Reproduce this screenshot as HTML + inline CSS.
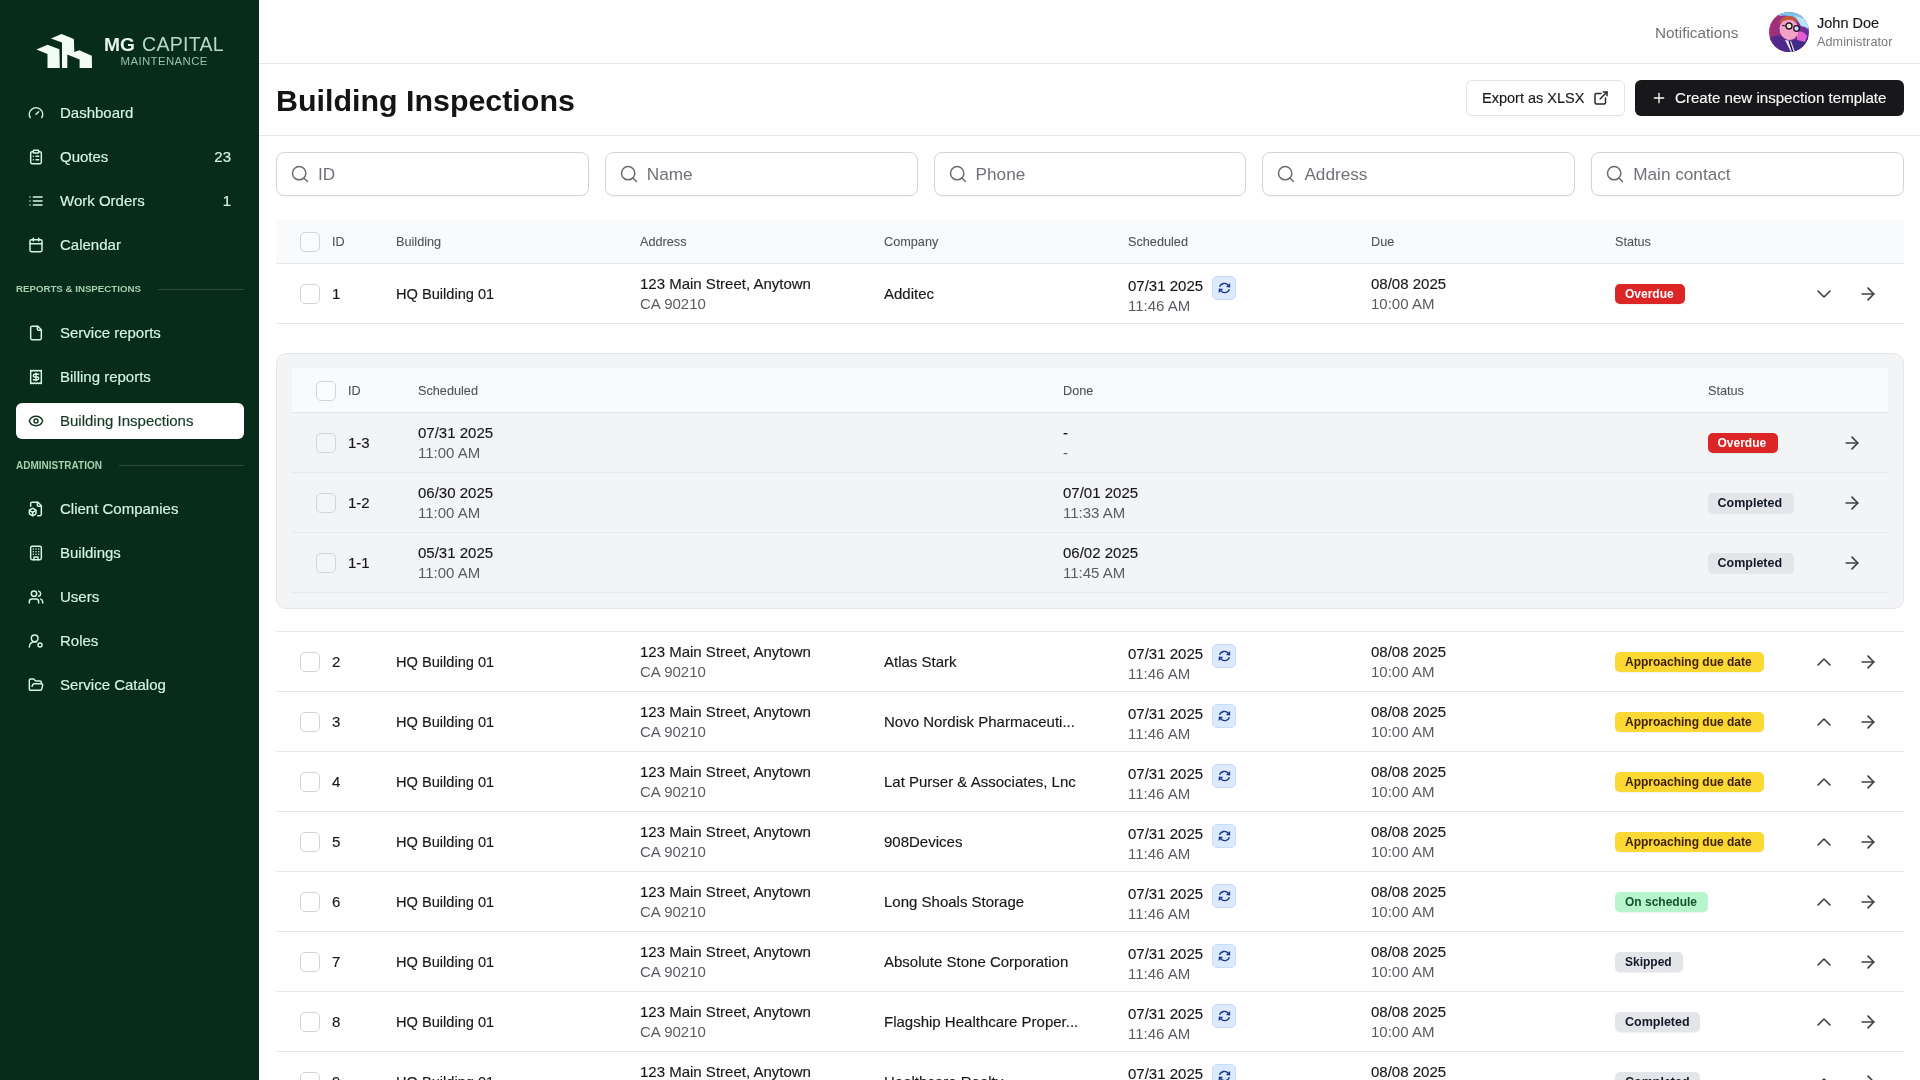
<!DOCTYPE html><html><head><meta charset="utf-8"><title>Building Inspections</title><style>
*{margin:0;padding:0;box-sizing:border-box}
html,body{width:1920px;height:1080px;overflow:hidden;background:#fff;font-family:"Liberation Sans", sans-serif;}
.abs{position:absolute}
#root{position:absolute;left:0;top:0;width:1920px;height:1080px;will-change:transform}
.t{position:absolute;white-space:nowrap;line-height:1}
#sb{position:absolute;left:0;top:0;width:259px;height:1080px;background:#072d1a;}
.nav{color:#d9f5e2;font-size:15px;-webkit-text-stroke:0.15px #d9f5e2}
.sec{color:#a6cfb0;font-size:10px;font-weight:bold;letter-spacing:0px}
.hd{color:#52525b;font-size:12.7px;-webkit-text-stroke:0.1px #52525b}
.p{color:#18181b;font-size:15px;-webkit-text-stroke:0.15px #18181b}
.s{color:#5b5b63;font-size:15px}
.cb{position:absolute;width:20px;height:20px;border:1px solid #d4d4d8;border-radius:5px;background:#fff}
.cbg{background:#f4f5f7}
.line{position:absolute;height:1px;background:#e7e8eb}
.badge{position:absolute;height:20px;border-radius:5px;font-size:12px;font-weight:bold;line-height:20px;padding:0 10px;white-space:nowrap;box-shadow:0 1px 1px rgba(0,0,0,0.06)}
.red{background:#dc2626;color:#fff}
.yel{background:#fcd833;color:#3f2107}
.grn{background:#b8f5cd;color:#14532d}
.gry{background:#e4e5e9;color:#111827}
.ic{position:absolute;line-height:0}
</style></head><body><div id="root"><div id="sb"><svg class="abs" style="left:0;top:0" width="259" height="90" viewBox="0 0 259 90"><polygon fill="#f3fbf5" points="36.4,49.5 47.5,44.8 59.4,49.3 59.8,68 47.5,68 47.5,54"/><polygon fill="#f3fbf5" points="50.9,38.4 61.5,34 73.9,39.1 74.3,52 79.4,50.2 91.8,55.7 92,68 79.6,68 79.6,59.5 67.3,54.4 67.3,68 62,68 62,42.5"/></svg><div class="t" style="left:104px;top:35px;font-size:19.2px;font-weight:bold;color:#eaf6ee">MG</div><div class="t" style="left:142px;top:35px;font-size:19.5px;color:#b9d8c3;letter-spacing:0.3px">CAPITAL</div><div class="t" style="left:120.5px;top:56px;font-size:11.4px;color:#98c2a6;letter-spacing:0.4px">MAINTENANCE</div><div class="abs" style="left:16px;top:403px;width:228px;height:36px;background:#fdfefd;border-radius:6px"></div><div class="ic" style="left:28px;top:105px;color:#d9f5e2"><svg width="16" height="16" viewBox="0 0 24 24" fill="none" stroke="currentColor" stroke-width="2.2" stroke-linecap="round" stroke-linejoin="round" ><path d="m12 14 4-4"/><path d="M3.34 19a10 10 0 1 1 17.32 0"/></svg></div><div class="t nav" style="left:60px;top:105px;color:#d9f5e2;-webkit-text-stroke-color:#d9f5e2">Dashboard</div><div class="ic" style="left:28px;top:149px;color:#d9f5e2"><svg width="16" height="16" viewBox="0 0 24 24" fill="none" stroke="currentColor" stroke-width="2.2" stroke-linecap="round" stroke-linejoin="round" ><rect width="8" height="4" x="8" y="2" rx="1" ry="1"/><path d="M16 4h2a2 2 0 0 1 2 2v14a2 2 0 0 1-2 2H6a2 2 0 0 1-2-2V6a2 2 0 0 1 2-2h2"/><path d="M12 11h4"/><path d="M12 16h4"/><path d="M8 11h.01"/><path d="M8 16h.01"/></svg></div><div class="t nav" style="left:60px;top:149px;color:#d9f5e2;-webkit-text-stroke-color:#d9f5e2">Quotes</div><div class="t nav" style="right:28px;top:149px">23</div><div class="ic" style="left:28px;top:193px;color:#d9f5e2"><svg width="16" height="16" viewBox="0 0 24 24" fill="none" stroke="currentColor" stroke-width="2.2" stroke-linecap="round" stroke-linejoin="round" ><path d="M3 12h.01"/><path d="M3 18h.01"/><path d="M3 6h.01"/><path d="M8 12h13"/><path d="M8 18h13"/><path d="M8 6h13"/></svg></div><div class="t nav" style="left:60px;top:193px;color:#d9f5e2;-webkit-text-stroke-color:#d9f5e2">Work Orders</div><div class="t nav" style="right:28px;top:193px">1</div><div class="ic" style="left:28px;top:237px;color:#d9f5e2"><svg width="16" height="16" viewBox="0 0 24 24" fill="none" stroke="currentColor" stroke-width="2.2" stroke-linecap="round" stroke-linejoin="round" ><path d="M8 2v4"/><path d="M16 2v4"/><rect width="18" height="18" x="3" y="4" rx="2"/><path d="M3 10h18"/></svg></div><div class="t nav" style="left:60px;top:237px;color:#d9f5e2;-webkit-text-stroke-color:#d9f5e2">Calendar</div><div class="ic" style="left:28px;top:325px;color:#d9f5e2"><svg width="16" height="16" viewBox="0 0 24 24" fill="none" stroke="currentColor" stroke-width="2.2" stroke-linecap="round" stroke-linejoin="round" ><path d="M15 2H6a2 2 0 0 0-2 2v16a2 2 0 0 0 2 2h12a2 2 0 0 0 2-2V7Z"/><path d="M14 2v4a2 2 0 0 0 2 2h4"/></svg></div><div class="t nav" style="left:60px;top:325px;color:#d9f5e2;-webkit-text-stroke-color:#d9f5e2">Service reports</div><div class="ic" style="left:28px;top:369px;color:#d9f5e2"><svg width="16" height="16" viewBox="0 0 24 24" fill="none" stroke="currentColor" stroke-width="2.2" stroke-linecap="round" stroke-linejoin="round" ><path d="M4 2v20l2-1 2 1 2-1 2 1 2-1 2 1 2-1 2 1V2l-2 1-2-1-2 1-2-1-2 1-2-1-2 1Z"/><path d="M16 8h-6a2 2 0 1 0 0 4h4a2 2 0 1 1 0 4H8"/><path d="M12 17.5v-11"/></svg></div><div class="t nav" style="left:60px;top:369px;color:#d9f5e2;-webkit-text-stroke-color:#d9f5e2">Billing reports</div><div class="ic" style="left:28px;top:413px;color:#163626"><svg width="16" height="16" viewBox="0 0 24 24" fill="none" stroke="currentColor" stroke-width="2.2" stroke-linecap="round" stroke-linejoin="round" ><path d="M2.062 12.348a1 1 0 0 1 0-.696 10.75 10.75 0 0 1 19.876 0 1 1 0 0 1 0 .696 10.75 10.75 0 0 1-19.876 0"/><circle cx="12" cy="12" r="3"/></svg></div><div class="t nav" style="left:60px;top:413px;color:#163626;-webkit-text-stroke-color:#163626">Building Inspections</div><div class="ic" style="left:28px;top:501px;color:#d9f5e2"><svg width="16" height="16" viewBox="0 0 24 24" fill="none" stroke="currentColor" stroke-width="2.2" stroke-linecap="round" stroke-linejoin="round" ><path d="M14.5 22H18a2 2 0 0 0 2-2V7l-5-5H6a2 2 0 0 0-2 2v4"/><path d="M14 2v4a2 2 0 0 0 2 2h4"/><path d="M3 13.1a2 2 0 0 0-1 1.76v3.24a2 2 0 0 0 .97 1.78L6 21.7a2 2 0 0 0 2.03.01L11 19.9a2 2 0 0 0 1-1.76V14.9a2 2 0 0 0-.97-1.78L8 11.3a2 2 0 0 0-2.03-.01Z"/><path d="M7 17v5"/><path d="M11.7 14.2 7 17l-4.7-2.8"/></svg></div><div class="t nav" style="left:60px;top:501px;color:#d9f5e2;-webkit-text-stroke-color:#d9f5e2">Client Companies</div><div class="ic" style="left:28px;top:545px;color:#d9f5e2"><svg width="16" height="16" viewBox="0 0 24 24" fill="none" stroke="currentColor" stroke-width="2.2" stroke-linecap="round" stroke-linejoin="round" ><rect width="16" height="20" x="4" y="2" rx="2" ry="2"/><path d="M9 22v-4h6v4"/><path d="M8 6h.01"/><path d="M16 6h.01"/><path d="M12 6h.01"/><path d="M12 10h.01"/><path d="M12 14h.01"/><path d="M16 10h.01"/><path d="M16 14h.01"/><path d="M8 10h.01"/><path d="M8 14h.01"/></svg></div><div class="t nav" style="left:60px;top:545px;color:#d9f5e2;-webkit-text-stroke-color:#d9f5e2">Buildings</div><div class="ic" style="left:28px;top:589px;color:#d9f5e2"><svg width="16" height="16" viewBox="0 0 24 24" fill="none" stroke="currentColor" stroke-width="2.2" stroke-linecap="round" stroke-linejoin="round" ><path d="M16 21v-2a4 4 0 0 0-4-4H6a4 4 0 0 0-4 4v2"/><circle cx="9" cy="7" r="4"/><path d="M22 21v-2a4 4 0 0 0-3-3.87"/><path d="M16 3.13a4 4 0 0 1 0 7.75"/></svg></div><div class="t nav" style="left:60px;top:589px;color:#d9f5e2;-webkit-text-stroke-color:#d9f5e2">Users</div><div class="ic" style="left:28px;top:633px;color:#d9f5e2"><svg width="16" height="16" viewBox="0 0 24 24" fill="none" stroke="currentColor" stroke-width="2.2" stroke-linecap="round" stroke-linejoin="round" ><path d="M2 21a8 8 0 0 1 10.4-7.6"/><circle cx="10" cy="8" r="5"/><circle cx="18" cy="18" r="3"/></svg></div><div class="t nav" style="left:60px;top:633px;color:#d9f5e2;-webkit-text-stroke-color:#d9f5e2">Roles</div><div class="ic" style="left:28px;top:677px;color:#d9f5e2"><svg width="16" height="16" viewBox="0 0 24 24" fill="none" stroke="currentColor" stroke-width="2.2" stroke-linecap="round" stroke-linejoin="round" ><path d="m6 14 1.5-2.9A2 2 0 0 1 9.24 10H20a2 2 0 0 1 1.94 2.5l-1.54 6a2 2 0 0 1-1.95 1.5H4a2 2 0 0 1-2-2V5a2 2 0 0 1 2-2h3.9a2 2 0 0 1 1.69.9l.81 1.2a2 2 0 0 0 1.67.9H18a2 2 0 0 1 2 2v2"/></svg></div><div class="t nav" style="left:60px;top:677px;color:#d9f5e2;-webkit-text-stroke-color:#d9f5e2">Service Catalog</div><div class="t sec" style="left:16px;top:284px;font-size:9.7px">REPORTS &amp; INSPECTIONS</div><div class="abs" style="left:158px;top:289px;width:86px;height:1px;background:#2a4a37"></div><div class="t sec" style="left:16px;top:461px">ADMINISTRATION</div><div class="abs" style="left:119px;top:465px;width:125px;height:1px;background:#2a4a37"></div></div><div class="line" style="left:259px;top:63px;width:1661px"></div><div class="t" style="left:1655px;top:25px;font-size:15.3px;color:#737373">Notifications</div><svg class="abs" style="left:1769px;top:12px" width="40" height="40" viewBox="0 0 40 40"><defs><clipPath id="av"><circle cx="20" cy="20" r="20"/></clipPath><linearGradient id="avg" x1="0" y1="0" x2="1" y2="0.3"><stop offset="0" stop-color="#b0306a"/><stop offset="0.55" stop-color="#8a2f8e"/><stop offset="1" stop-color="#6a2a9a"/></linearGradient><linearGradient id="avs" x1="0" y1="0" x2="1" y2="0"><stop offset="0" stop-color="#5a2a8a"/><stop offset="1" stop-color="#3a2a8a"/></linearGradient></defs><g clip-path="url(#av)"><rect width="40" height="40" fill="url(#avg)"/><path d="M10 0 L40 0 L40 18 Q34 14 30 10 Q24 2 10 4Z" fill="#7cc4ec"/><path d="M26 4 L40 8 L40 16 L32 14Z" fill="#b8e4f4"/><path d="M0 26 Q8 22 14 24 L24 28 L40 26 L40 40 L0 40Z" fill="url(#avs)"/><path d="M28 20 Q34 18 38 24 L36 30 L28 28Z" fill="#e060d0"/><ellipse cx="20" cy="17.5" rx="9.5" ry="10.5" transform="rotate(-18 20 17.5)" fill="#f2a2c2"/><path d="M10 12 Q12 3 21 4 Q28 5 30 11 Q24 7 18 8 Q13 9 10 12Z" fill="#c25a3e"/><circle cx="20" cy="14" r="3" fill="#dfe8c8" stroke="#2a0e2a" stroke-width="1.3"/><circle cx="27.5" cy="16.5" r="2.8" fill="#bfe4f8" stroke="#2a0e2a" stroke-width="1.3"/><path d="M13 13.5 L17 14" stroke="#2a0e2a" stroke-width="1.2"/><path d="M16 28 L22 40 L26 40 L22 29Z" fill="#efe6f4"/><path d="M19.5 29 L23 40 L24.5 40 L21 29Z" fill="#1a1030"/></g></svg><div class="t" style="left:1817px;top:16px;font-size:14.5px;color:#18181b;-webkit-text-stroke:0.15px #18181b">John Doe</div><div class="t" style="left:1817px;top:36px;font-size:12.6px;color:#77777d;letter-spacing:0.1px">Administrator</div><div class="t" style="left:276px;top:85px;font-size:30.4px;font-weight:bold;color:#141414">Building Inspections</div><div class="line" style="left:259px;top:135px;width:1661px"></div><div class="abs" style="left:1466px;top:80px;width:159px;height:36px;border:1px solid #e4e4e7;border-radius:6px;background:#fff;box-shadow:0 1px 2px rgba(0,0,0,0.04)"></div><div class="t" style="left:1482px;top:90.5px;font-size:14.5px;color:#18181b;-webkit-text-stroke:0.15px #18181b">Export as XLSX</div><div class="ic" style="left:1592px;top:89px;color:#27272a"><svg width="18" height="18" viewBox="0 0 24 24" fill="none" stroke="currentColor" stroke-width="2" stroke-linecap="round" stroke-linejoin="round" ><path d="M12 6h-6a2 2 0 0 0 -2 2v10a2 2 0 0 0 2 2h10a2 2 0 0 0 2 -2v-6"/><path d="M11 13l9 -9"/><path d="M15 4h5v5"/></svg></div><div class="abs" style="left:1635px;top:80px;width:269px;height:36px;border-radius:6px;background:#18181b"></div><div class="ic" style="left:1651px;top:90px;color:#fafafa"><svg width="16" height="16" viewBox="0 0 24 24" fill="none" stroke="currentColor" stroke-width="2" stroke-linecap="round" stroke-linejoin="round" ><path d="M5 12h14"/><path d="M12 5v14"/></svg></div><div class="t" style="left:1675px;top:90px;font-size:15.1px;color:#fafafa;-webkit-text-stroke:0.15px #fafafa">Create new inspection template</div><div class="abs" style="left:276.0px;top:152px;width:312.8px;height:44px;border:1px solid #d4d4d8;border-radius:8px;background:#fff;box-shadow:0 1px 2px rgba(0,0,0,0.03)"></div><div class="ic" style="left:290.0px;top:164px;color:#6b6b73"><svg width="20" height="20" viewBox="0 0 24 24" fill="none" stroke="currentColor" stroke-width="1.8" stroke-linecap="round" stroke-linejoin="round" ><circle cx="11" cy="11" r="8"/><path d="m21 21-4.3-4.3"/></svg></div><div class="t" style="left:318.0px;top:166px;font-size:17.2px;color:#71717a">ID</div><div class="abs" style="left:604.8px;top:152px;width:312.8px;height:44px;border:1px solid #d4d4d8;border-radius:8px;background:#fff;box-shadow:0 1px 2px rgba(0,0,0,0.03)"></div><div class="ic" style="left:618.8px;top:164px;color:#6b6b73"><svg width="20" height="20" viewBox="0 0 24 24" fill="none" stroke="currentColor" stroke-width="1.8" stroke-linecap="round" stroke-linejoin="round" ><circle cx="11" cy="11" r="8"/><path d="m21 21-4.3-4.3"/></svg></div><div class="t" style="left:646.8px;top:166px;font-size:17.2px;color:#71717a">Name</div><div class="abs" style="left:933.6px;top:152px;width:312.8px;height:44px;border:1px solid #d4d4d8;border-radius:8px;background:#fff;box-shadow:0 1px 2px rgba(0,0,0,0.03)"></div><div class="ic" style="left:947.6px;top:164px;color:#6b6b73"><svg width="20" height="20" viewBox="0 0 24 24" fill="none" stroke="currentColor" stroke-width="1.8" stroke-linecap="round" stroke-linejoin="round" ><circle cx="11" cy="11" r="8"/><path d="m21 21-4.3-4.3"/></svg></div><div class="t" style="left:975.6px;top:166px;font-size:17.2px;color:#71717a">Phone</div><div class="abs" style="left:1262.4px;top:152px;width:312.8px;height:44px;border:1px solid #d4d4d8;border-radius:8px;background:#fff;box-shadow:0 1px 2px rgba(0,0,0,0.03)"></div><div class="ic" style="left:1276.4px;top:164px;color:#6b6b73"><svg width="20" height="20" viewBox="0 0 24 24" fill="none" stroke="currentColor" stroke-width="1.8" stroke-linecap="round" stroke-linejoin="round" ><circle cx="11" cy="11" r="8"/><path d="m21 21-4.3-4.3"/></svg></div><div class="t" style="left:1304.4px;top:166px;font-size:17.2px;color:#71717a">Address</div><div class="abs" style="left:1591.2px;top:152px;width:312.8px;height:44px;border:1px solid #d4d4d8;border-radius:8px;background:#fff;box-shadow:0 1px 2px rgba(0,0,0,0.03)"></div><div class="ic" style="left:1605.2px;top:164px;color:#6b6b73"><svg width="20" height="20" viewBox="0 0 24 24" fill="none" stroke="currentColor" stroke-width="1.8" stroke-linecap="round" stroke-linejoin="round" ><circle cx="11" cy="11" r="8"/><path d="m21 21-4.3-4.3"/></svg></div><div class="t" style="left:1633.2px;top:166px;font-size:17.2px;color:#71717a">Main contact</div><div class="abs" style="left:276px;top:220px;width:1628px;height:43px;background:#f9fafb"></div><div class="line" style="left:276px;top:263px;width:1628px"></div><div class="cb" style="left:300px;top:232px;background:#fafbfc"></div><div class="t hd" style="left:332px;top:236px">ID</div><div class="t hd" style="left:396px;top:236px">Building</div><div class="t hd" style="left:640px;top:236px">Address</div><div class="t hd" style="left:884px;top:236px">Company</div><div class="t hd" style="left:1128px;top:236px">Scheduled</div><div class="t hd" style="left:1371px;top:236px">Due</div><div class="t hd" style="left:1615px;top:236px">Status</div><div class="cb" style="left:300px;top:284px"></div><div class="t p" style="left:332px;top:286px">1</div><div class="t p" style="left:396px;top:287px;font-size:14.6px">HQ Building 01</div><div class="t p" style="left:640px;top:276px">123 Main Street, Anytown</div><div class="t s" style="left:640px;top:296px">CA 90210</div><div class="t p" style="left:884px;top:286px">Additec</div><div class="t p" style="left:1128px;top:278px">07/31 2025</div><div class="t s" style="left:1128px;top:298px">11:46 AM</div><div class="abs" style="left:1212px;top:276px;width:24px;height:24px;border-radius:5px;background:#dbeafe;border:1px solid #c9dcfb"></div><svg class="abs" style="left:1212px;top:276px" width="24" height="24" viewBox="0 0 24 24"><path d="M7.6 10.8A5 5 0 0 1 16.3 9.4" fill="none" stroke="#1e3a8a" stroke-width="1.35"/><path d="M17.4 13.3A5 5 0 0 1 8.7 14.6" fill="none" stroke="#1e3a8a" stroke-width="1.35"/><polygon points="18.1,7.1 18.2,11.6 13.9,11.1" fill="#1e3a8a"/><polygon points="6.6,16.9 6.8,12.4 11.1,12.9" fill="#1e3a8a"/></svg><div class="t p" style="left:1371px;top:276px">08/08 2025</div><div class="t s" style="left:1371px;top:296px">10:00 AM</div><div class="badge red" style="left:1615px;top:284px;width:70px;">Overdue</div><div class="ic" style="left:1812px;top:282px;color:#3f3f46"><svg width="24" height="24" viewBox="0 0 24 24" fill="none" stroke="currentColor" stroke-width="1.6" stroke-linecap="round" stroke-linejoin="round" ><path d="m6 9 6 6 6-6"/></svg></div><div class="ic" style="left:1858px;top:284px;color:#3f3f46"><svg width="20" height="20" viewBox="0 0 24 24" fill="none" stroke="currentColor" stroke-width="2" stroke-linecap="round" stroke-linejoin="round" ><path d="M5 12h14"/><path d="m12 5 7 7-7 7"/></svg></div><div class="line" style="left:276px;top:323px;width:1628px"></div><div class="abs" style="left:276px;top:353px;width:1628px;height:256px;border:1px solid #e6e7ea;border-radius:10px;background:#f3f4f6"></div><div class="abs" style="left:292px;top:368px;width:1596px;height:44px;background:#f9fafb"></div><div class="line" style="left:292px;top:412px;width:1596px;background:#e5e7eb"></div><div class="cb" style="left:316px;top:381px;background:#fafbfc"></div><div class="t hd" style="left:348px;top:385px">ID</div><div class="t hd" style="left:418px;top:385px">Scheduled</div><div class="t hd" style="left:1063px;top:385px">Done</div><div class="t hd" style="left:1708px;top:385px">Status</div><div class="cb cbg" style="left:316px;top:433px"></div><div class="t p" style="left:348px;top:435px">1-3</div><div class="t p" style="left:418px;top:425px">07/31 2025</div><div class="t s" style="left:418px;top:445px">11:00 AM</div><div class="t p" style="left:1063px;top:425px">-</div><div class="t s" style="left:1063px;top:445px">-</div><div class="badge red" style="left:1707.5px;top:433px;width:70px;">Overdue</div><div class="ic" style="left:1842px;top:433px;color:#3f3f46"><svg width="20" height="20" viewBox="0 0 24 24" fill="none" stroke="currentColor" stroke-width="2" stroke-linecap="round" stroke-linejoin="round" ><path d="M5 12h14"/><path d="m12 5 7 7-7 7"/></svg></div><div class="line" style="left:292px;top:472px;width:1596px"></div><div class="cb cbg" style="left:316px;top:493px"></div><div class="t p" style="left:348px;top:495px">1-2</div><div class="t p" style="left:418px;top:485px">06/30 2025</div><div class="t s" style="left:418px;top:505px">11:00 AM</div><div class="t p" style="left:1063px;top:485px">07/01 2025</div><div class="t s" style="left:1063px;top:505px">11:33 AM</div><div class="badge gry" style="left:1707.5px;top:493px;width:85px;font-size:12.5px;width:86px">Completed</div><div class="ic" style="left:1842px;top:493px;color:#3f3f46"><svg width="20" height="20" viewBox="0 0 24 24" fill="none" stroke="currentColor" stroke-width="2" stroke-linecap="round" stroke-linejoin="round" ><path d="M5 12h14"/><path d="m12 5 7 7-7 7"/></svg></div><div class="line" style="left:292px;top:532px;width:1596px"></div><div class="cb cbg" style="left:316px;top:553px"></div><div class="t p" style="left:348px;top:555px">1-1</div><div class="t p" style="left:418px;top:545px">05/31 2025</div><div class="t s" style="left:418px;top:565px">11:00 AM</div><div class="t p" style="left:1063px;top:545px">06/02 2025</div><div class="t s" style="left:1063px;top:565px">11:45 AM</div><div class="badge gry" style="left:1707.5px;top:553px;width:85px;font-size:12.5px;width:86px">Completed</div><div class="ic" style="left:1842px;top:553px;color:#3f3f46"><svg width="20" height="20" viewBox="0 0 24 24" fill="none" stroke="currentColor" stroke-width="2" stroke-linecap="round" stroke-linejoin="round" ><path d="M5 12h14"/><path d="m12 5 7 7-7 7"/></svg></div><div class="line" style="left:292px;top:592px;width:1596px"></div><div class="line" style="left:276px;top:631px;width:1628px"></div><div class="cb" style="left:300px;top:652px"></div><div class="t p" style="left:332px;top:654px">2</div><div class="t p" style="left:396px;top:655px;font-size:14.6px">HQ Building 01</div><div class="t p" style="left:640px;top:644px">123 Main Street, Anytown</div><div class="t s" style="left:640px;top:664px">CA 90210</div><div class="t p" style="left:884px;top:654px">Atlas Stark</div><div class="t p" style="left:1128px;top:646px">07/31 2025</div><div class="t s" style="left:1128px;top:666px">11:46 AM</div><div class="abs" style="left:1212px;top:644px;width:24px;height:24px;border-radius:5px;background:#dbeafe;border:1px solid #c9dcfb"></div><svg class="abs" style="left:1212px;top:644px" width="24" height="24" viewBox="0 0 24 24"><path d="M7.6 10.8A5 5 0 0 1 16.3 9.4" fill="none" stroke="#1e3a8a" stroke-width="1.35"/><path d="M17.4 13.3A5 5 0 0 1 8.7 14.6" fill="none" stroke="#1e3a8a" stroke-width="1.35"/><polygon points="18.1,7.1 18.2,11.6 13.9,11.1" fill="#1e3a8a"/><polygon points="6.6,16.9 6.8,12.4 11.1,12.9" fill="#1e3a8a"/></svg><div class="t p" style="left:1371px;top:644px">08/08 2025</div><div class="t s" style="left:1371px;top:664px">10:00 AM</div><div class="badge yel" style="left:1615px;top:652px;width:149px;">Approaching due date</div><div class="ic" style="left:1812px;top:650px;color:#3f3f46"><svg width="24" height="24" viewBox="0 0 24 24" fill="none" stroke="currentColor" stroke-width="1.6" stroke-linecap="round" stroke-linejoin="round" ><path d="m18 15-6-6-6 6"/></svg></div><div class="ic" style="left:1858px;top:652px;color:#3f3f46"><svg width="20" height="20" viewBox="0 0 24 24" fill="none" stroke="currentColor" stroke-width="2" stroke-linecap="round" stroke-linejoin="round" ><path d="M5 12h14"/><path d="m12 5 7 7-7 7"/></svg></div><div class="line" style="left:276px;top:691px;width:1628px"></div><div class="cb" style="left:300px;top:712px"></div><div class="t p" style="left:332px;top:714px">3</div><div class="t p" style="left:396px;top:715px;font-size:14.6px">HQ Building 01</div><div class="t p" style="left:640px;top:704px">123 Main Street, Anytown</div><div class="t s" style="left:640px;top:724px">CA 90210</div><div class="t p" style="left:884px;top:714px">Novo Nordisk Pharmaceuti...</div><div class="t p" style="left:1128px;top:706px">07/31 2025</div><div class="t s" style="left:1128px;top:726px">11:46 AM</div><div class="abs" style="left:1212px;top:704px;width:24px;height:24px;border-radius:5px;background:#dbeafe;border:1px solid #c9dcfb"></div><svg class="abs" style="left:1212px;top:704px" width="24" height="24" viewBox="0 0 24 24"><path d="M7.6 10.8A5 5 0 0 1 16.3 9.4" fill="none" stroke="#1e3a8a" stroke-width="1.35"/><path d="M17.4 13.3A5 5 0 0 1 8.7 14.6" fill="none" stroke="#1e3a8a" stroke-width="1.35"/><polygon points="18.1,7.1 18.2,11.6 13.9,11.1" fill="#1e3a8a"/><polygon points="6.6,16.9 6.8,12.4 11.1,12.9" fill="#1e3a8a"/></svg><div class="t p" style="left:1371px;top:704px">08/08 2025</div><div class="t s" style="left:1371px;top:724px">10:00 AM</div><div class="badge yel" style="left:1615px;top:712px;width:149px;">Approaching due date</div><div class="ic" style="left:1812px;top:710px;color:#3f3f46"><svg width="24" height="24" viewBox="0 0 24 24" fill="none" stroke="currentColor" stroke-width="1.6" stroke-linecap="round" stroke-linejoin="round" ><path d="m18 15-6-6-6 6"/></svg></div><div class="ic" style="left:1858px;top:712px;color:#3f3f46"><svg width="20" height="20" viewBox="0 0 24 24" fill="none" stroke="currentColor" stroke-width="2" stroke-linecap="round" stroke-linejoin="round" ><path d="M5 12h14"/><path d="m12 5 7 7-7 7"/></svg></div><div class="line" style="left:276px;top:751px;width:1628px"></div><div class="cb" style="left:300px;top:772px"></div><div class="t p" style="left:332px;top:774px">4</div><div class="t p" style="left:396px;top:775px;font-size:14.6px">HQ Building 01</div><div class="t p" style="left:640px;top:764px">123 Main Street, Anytown</div><div class="t s" style="left:640px;top:784px">CA 90210</div><div class="t p" style="left:884px;top:774px">Lat Purser &amp; Associates, Lnc</div><div class="t p" style="left:1128px;top:766px">07/31 2025</div><div class="t s" style="left:1128px;top:786px">11:46 AM</div><div class="abs" style="left:1212px;top:764px;width:24px;height:24px;border-radius:5px;background:#dbeafe;border:1px solid #c9dcfb"></div><svg class="abs" style="left:1212px;top:764px" width="24" height="24" viewBox="0 0 24 24"><path d="M7.6 10.8A5 5 0 0 1 16.3 9.4" fill="none" stroke="#1e3a8a" stroke-width="1.35"/><path d="M17.4 13.3A5 5 0 0 1 8.7 14.6" fill="none" stroke="#1e3a8a" stroke-width="1.35"/><polygon points="18.1,7.1 18.2,11.6 13.9,11.1" fill="#1e3a8a"/><polygon points="6.6,16.9 6.8,12.4 11.1,12.9" fill="#1e3a8a"/></svg><div class="t p" style="left:1371px;top:764px">08/08 2025</div><div class="t s" style="left:1371px;top:784px">10:00 AM</div><div class="badge yel" style="left:1615px;top:772px;width:149px;">Approaching due date</div><div class="ic" style="left:1812px;top:770px;color:#3f3f46"><svg width="24" height="24" viewBox="0 0 24 24" fill="none" stroke="currentColor" stroke-width="1.6" stroke-linecap="round" stroke-linejoin="round" ><path d="m18 15-6-6-6 6"/></svg></div><div class="ic" style="left:1858px;top:772px;color:#3f3f46"><svg width="20" height="20" viewBox="0 0 24 24" fill="none" stroke="currentColor" stroke-width="2" stroke-linecap="round" stroke-linejoin="round" ><path d="M5 12h14"/><path d="m12 5 7 7-7 7"/></svg></div><div class="line" style="left:276px;top:811px;width:1628px"></div><div class="cb" style="left:300px;top:832px"></div><div class="t p" style="left:332px;top:834px">5</div><div class="t p" style="left:396px;top:835px;font-size:14.6px">HQ Building 01</div><div class="t p" style="left:640px;top:824px">123 Main Street, Anytown</div><div class="t s" style="left:640px;top:844px">CA 90210</div><div class="t p" style="left:884px;top:834px">908Devices</div><div class="t p" style="left:1128px;top:826px">07/31 2025</div><div class="t s" style="left:1128px;top:846px">11:46 AM</div><div class="abs" style="left:1212px;top:824px;width:24px;height:24px;border-radius:5px;background:#dbeafe;border:1px solid #c9dcfb"></div><svg class="abs" style="left:1212px;top:824px" width="24" height="24" viewBox="0 0 24 24"><path d="M7.6 10.8A5 5 0 0 1 16.3 9.4" fill="none" stroke="#1e3a8a" stroke-width="1.35"/><path d="M17.4 13.3A5 5 0 0 1 8.7 14.6" fill="none" stroke="#1e3a8a" stroke-width="1.35"/><polygon points="18.1,7.1 18.2,11.6 13.9,11.1" fill="#1e3a8a"/><polygon points="6.6,16.9 6.8,12.4 11.1,12.9" fill="#1e3a8a"/></svg><div class="t p" style="left:1371px;top:824px">08/08 2025</div><div class="t s" style="left:1371px;top:844px">10:00 AM</div><div class="badge yel" style="left:1615px;top:832px;width:149px;">Approaching due date</div><div class="ic" style="left:1812px;top:830px;color:#3f3f46"><svg width="24" height="24" viewBox="0 0 24 24" fill="none" stroke="currentColor" stroke-width="1.6" stroke-linecap="round" stroke-linejoin="round" ><path d="m18 15-6-6-6 6"/></svg></div><div class="ic" style="left:1858px;top:832px;color:#3f3f46"><svg width="20" height="20" viewBox="0 0 24 24" fill="none" stroke="currentColor" stroke-width="2" stroke-linecap="round" stroke-linejoin="round" ><path d="M5 12h14"/><path d="m12 5 7 7-7 7"/></svg></div><div class="line" style="left:276px;top:871px;width:1628px"></div><div class="cb" style="left:300px;top:892px"></div><div class="t p" style="left:332px;top:894px">6</div><div class="t p" style="left:396px;top:895px;font-size:14.6px">HQ Building 01</div><div class="t p" style="left:640px;top:884px">123 Main Street, Anytown</div><div class="t s" style="left:640px;top:904px">CA 90210</div><div class="t p" style="left:884px;top:894px">Long Shoals Storage</div><div class="t p" style="left:1128px;top:886px">07/31 2025</div><div class="t s" style="left:1128px;top:906px">11:46 AM</div><div class="abs" style="left:1212px;top:884px;width:24px;height:24px;border-radius:5px;background:#dbeafe;border:1px solid #c9dcfb"></div><svg class="abs" style="left:1212px;top:884px" width="24" height="24" viewBox="0 0 24 24"><path d="M7.6 10.8A5 5 0 0 1 16.3 9.4" fill="none" stroke="#1e3a8a" stroke-width="1.35"/><path d="M17.4 13.3A5 5 0 0 1 8.7 14.6" fill="none" stroke="#1e3a8a" stroke-width="1.35"/><polygon points="18.1,7.1 18.2,11.6 13.9,11.1" fill="#1e3a8a"/><polygon points="6.6,16.9 6.8,12.4 11.1,12.9" fill="#1e3a8a"/></svg><div class="t p" style="left:1371px;top:884px">08/08 2025</div><div class="t s" style="left:1371px;top:904px">10:00 AM</div><div class="badge grn" style="left:1615px;top:892px;width:93px;">On schedule</div><div class="ic" style="left:1812px;top:890px;color:#3f3f46"><svg width="24" height="24" viewBox="0 0 24 24" fill="none" stroke="currentColor" stroke-width="1.6" stroke-linecap="round" stroke-linejoin="round" ><path d="m18 15-6-6-6 6"/></svg></div><div class="ic" style="left:1858px;top:892px;color:#3f3f46"><svg width="20" height="20" viewBox="0 0 24 24" fill="none" stroke="currentColor" stroke-width="2" stroke-linecap="round" stroke-linejoin="round" ><path d="M5 12h14"/><path d="m12 5 7 7-7 7"/></svg></div><div class="line" style="left:276px;top:931px;width:1628px"></div><div class="cb" style="left:300px;top:952px"></div><div class="t p" style="left:332px;top:954px">7</div><div class="t p" style="left:396px;top:955px;font-size:14.6px">HQ Building 01</div><div class="t p" style="left:640px;top:944px">123 Main Street, Anytown</div><div class="t s" style="left:640px;top:964px">CA 90210</div><div class="t p" style="left:884px;top:954px">Absolute Stone Corporation</div><div class="t p" style="left:1128px;top:946px">07/31 2025</div><div class="t s" style="left:1128px;top:966px">11:46 AM</div><div class="abs" style="left:1212px;top:944px;width:24px;height:24px;border-radius:5px;background:#dbeafe;border:1px solid #c9dcfb"></div><svg class="abs" style="left:1212px;top:944px" width="24" height="24" viewBox="0 0 24 24"><path d="M7.6 10.8A5 5 0 0 1 16.3 9.4" fill="none" stroke="#1e3a8a" stroke-width="1.35"/><path d="M17.4 13.3A5 5 0 0 1 8.7 14.6" fill="none" stroke="#1e3a8a" stroke-width="1.35"/><polygon points="18.1,7.1 18.2,11.6 13.9,11.1" fill="#1e3a8a"/><polygon points="6.6,16.9 6.8,12.4 11.1,12.9" fill="#1e3a8a"/></svg><div class="t p" style="left:1371px;top:944px">08/08 2025</div><div class="t s" style="left:1371px;top:964px">10:00 AM</div><div class="badge gry" style="left:1615px;top:952px;width:67.5px;">Skipped</div><div class="ic" style="left:1812px;top:950px;color:#3f3f46"><svg width="24" height="24" viewBox="0 0 24 24" fill="none" stroke="currentColor" stroke-width="1.6" stroke-linecap="round" stroke-linejoin="round" ><path d="m18 15-6-6-6 6"/></svg></div><div class="ic" style="left:1858px;top:952px;color:#3f3f46"><svg width="20" height="20" viewBox="0 0 24 24" fill="none" stroke="currentColor" stroke-width="2" stroke-linecap="round" stroke-linejoin="round" ><path d="M5 12h14"/><path d="m12 5 7 7-7 7"/></svg></div><div class="line" style="left:276px;top:991px;width:1628px"></div><div class="cb" style="left:300px;top:1012px"></div><div class="t p" style="left:332px;top:1014px">8</div><div class="t p" style="left:396px;top:1015px;font-size:14.6px">HQ Building 01</div><div class="t p" style="left:640px;top:1004px">123 Main Street, Anytown</div><div class="t s" style="left:640px;top:1024px">CA 90210</div><div class="t p" style="left:884px;top:1014px">Flagship Healthcare Proper...</div><div class="t p" style="left:1128px;top:1006px">07/31 2025</div><div class="t s" style="left:1128px;top:1026px">11:46 AM</div><div class="abs" style="left:1212px;top:1004px;width:24px;height:24px;border-radius:5px;background:#dbeafe;border:1px solid #c9dcfb"></div><svg class="abs" style="left:1212px;top:1004px" width="24" height="24" viewBox="0 0 24 24"><path d="M7.6 10.8A5 5 0 0 1 16.3 9.4" fill="none" stroke="#1e3a8a" stroke-width="1.35"/><path d="M17.4 13.3A5 5 0 0 1 8.7 14.6" fill="none" stroke="#1e3a8a" stroke-width="1.35"/><polygon points="18.1,7.1 18.2,11.6 13.9,11.1" fill="#1e3a8a"/><polygon points="6.6,16.9 6.8,12.4 11.1,12.9" fill="#1e3a8a"/></svg><div class="t p" style="left:1371px;top:1004px">08/08 2025</div><div class="t s" style="left:1371px;top:1024px">10:00 AM</div><div class="badge gry" style="left:1615px;top:1012px;width:85px;font-size:12.5px;">Completed</div><div class="ic" style="left:1812px;top:1010px;color:#3f3f46"><svg width="24" height="24" viewBox="0 0 24 24" fill="none" stroke="currentColor" stroke-width="1.6" stroke-linecap="round" stroke-linejoin="round" ><path d="m18 15-6-6-6 6"/></svg></div><div class="ic" style="left:1858px;top:1012px;color:#3f3f46"><svg width="20" height="20" viewBox="0 0 24 24" fill="none" stroke="currentColor" stroke-width="2" stroke-linecap="round" stroke-linejoin="round" ><path d="M5 12h14"/><path d="m12 5 7 7-7 7"/></svg></div><div class="line" style="left:276px;top:1051px;width:1628px"></div><div class="cb" style="left:300px;top:1072px"></div><div class="t p" style="left:332px;top:1074px">9</div><div class="t p" style="left:396px;top:1075px;font-size:14.6px">HQ Building 01</div><div class="t p" style="left:640px;top:1064px">123 Main Street, Anytown</div><div class="t s" style="left:640px;top:1084px">CA 90210</div><div class="t p" style="left:884px;top:1074px">Healthcare Realty</div><div class="t p" style="left:1128px;top:1066px">07/31 2025</div><div class="t s" style="left:1128px;top:1086px">11:46 AM</div><div class="abs" style="left:1212px;top:1064px;width:24px;height:24px;border-radius:5px;background:#dbeafe;border:1px solid #c9dcfb"></div><svg class="abs" style="left:1212px;top:1064px" width="24" height="24" viewBox="0 0 24 24"><path d="M7.6 10.8A5 5 0 0 1 16.3 9.4" fill="none" stroke="#1e3a8a" stroke-width="1.35"/><path d="M17.4 13.3A5 5 0 0 1 8.7 14.6" fill="none" stroke="#1e3a8a" stroke-width="1.35"/><polygon points="18.1,7.1 18.2,11.6 13.9,11.1" fill="#1e3a8a"/><polygon points="6.6,16.9 6.8,12.4 11.1,12.9" fill="#1e3a8a"/></svg><div class="t p" style="left:1371px;top:1064px">08/08 2025</div><div class="t s" style="left:1371px;top:1084px">10:00 AM</div><div class="badge gry" style="left:1615px;top:1072px;width:85px;font-size:12.5px;">Completed</div><div class="ic" style="left:1812px;top:1070px;color:#3f3f46"><svg width="24" height="24" viewBox="0 0 24 24" fill="none" stroke="currentColor" stroke-width="1.6" stroke-linecap="round" stroke-linejoin="round" ><path d="m18 15-6-6-6 6"/></svg></div><div class="ic" style="left:1858px;top:1072px;color:#3f3f46"><svg width="20" height="20" viewBox="0 0 24 24" fill="none" stroke="currentColor" stroke-width="2" stroke-linecap="round" stroke-linejoin="round" ><path d="M5 12h14"/><path d="m12 5 7 7-7 7"/></svg></div><div class="line" style="left:276px;top:1111px;width:1628px"></div></div></body></html>
